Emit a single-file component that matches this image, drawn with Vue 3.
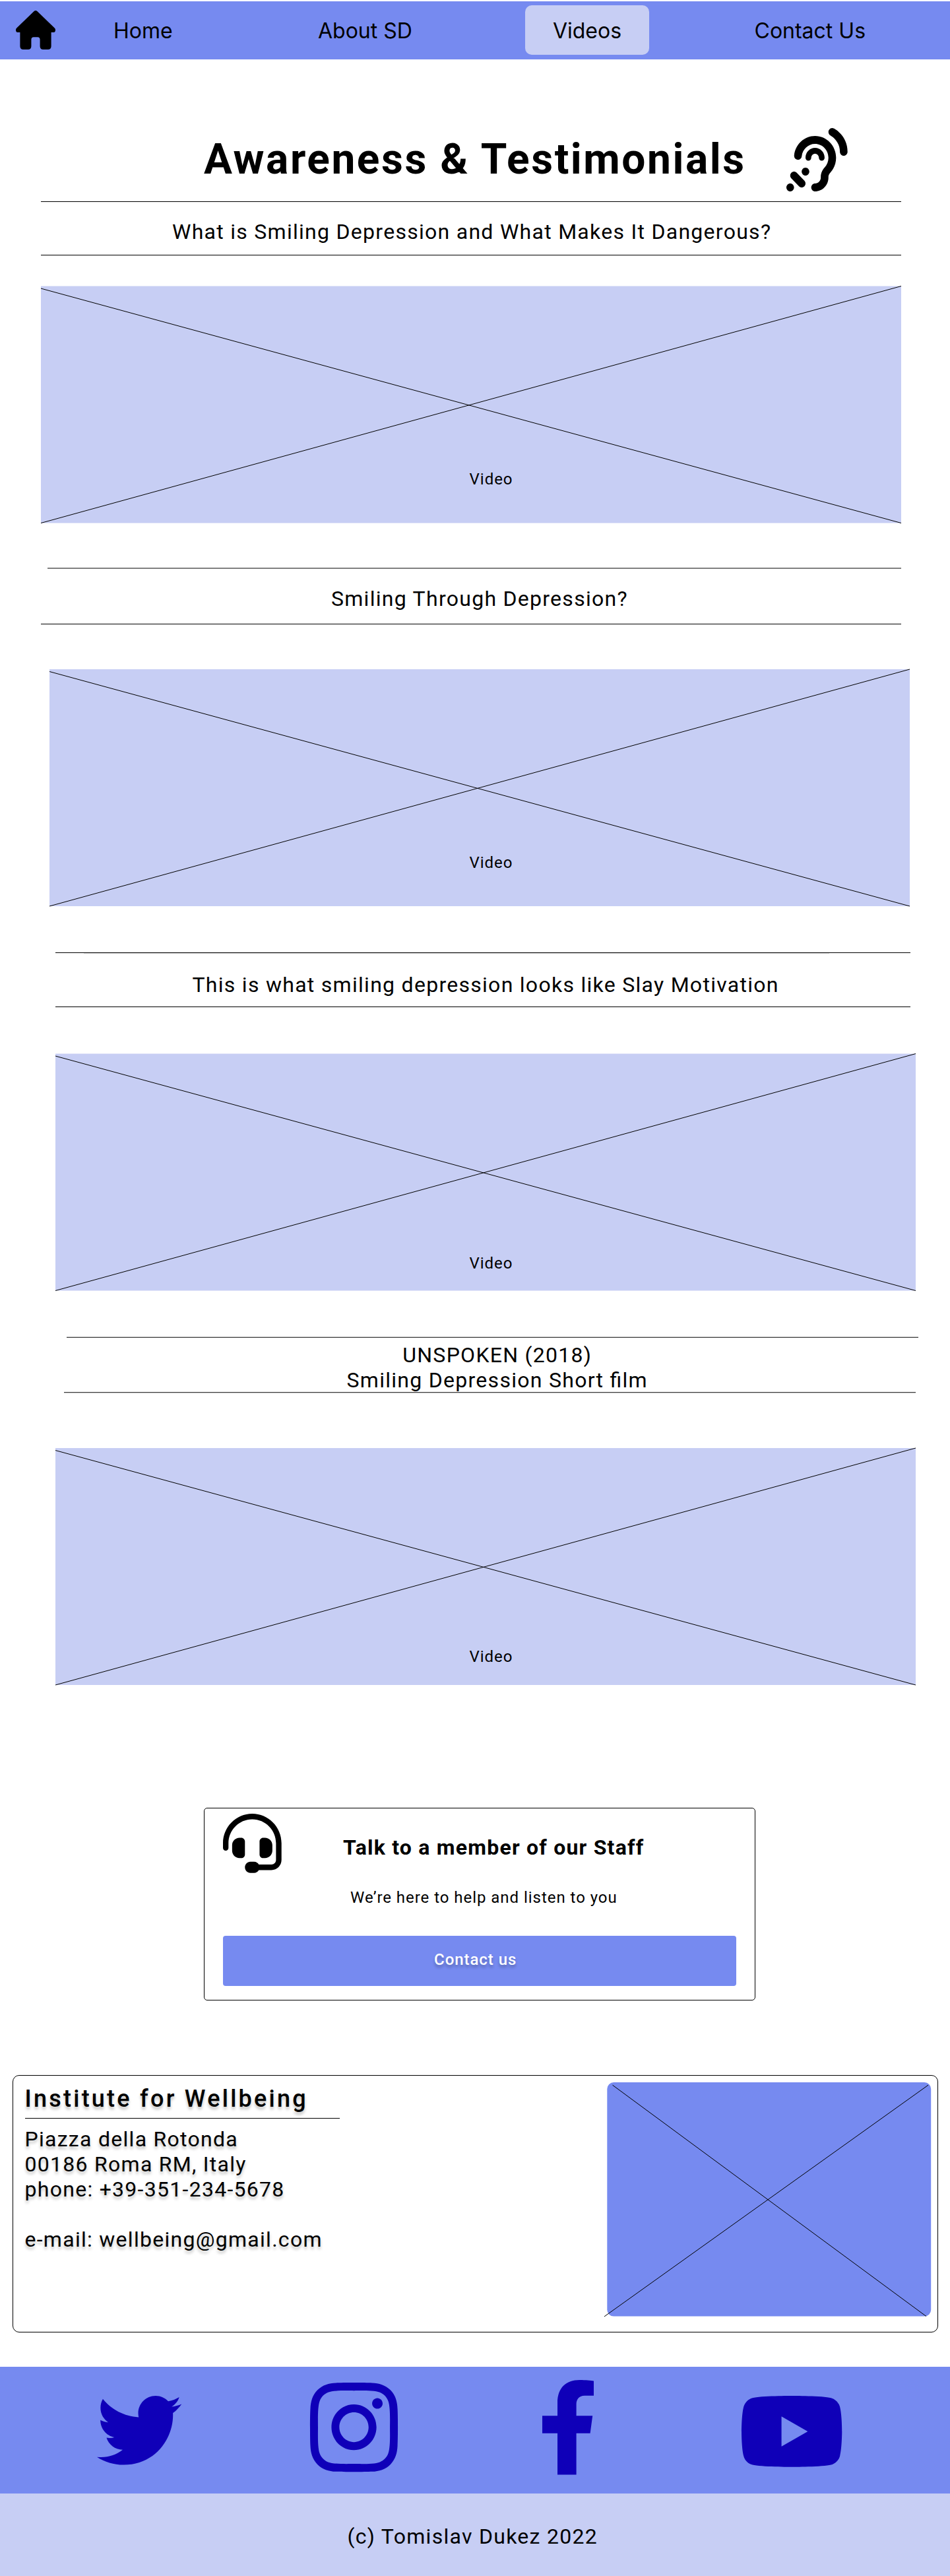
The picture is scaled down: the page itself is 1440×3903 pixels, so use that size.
<script setup>
const topics = [
  { id: 'dangerous', lines: ['What is Smiling Depression and What Makes It Dangerous?'], top: 0.5 },
  { id: 'through', lines: ['Smiling Through Depression?'], top: 1 },
  { id: 'motivation', lines: ['This is what smiling depression looks like Slay Motivation'], top: 0.5 },
  { id: 'unspoken', lines: ['UNSPOKEN (2018)', 'Smiling Depression Short film'], top: 1 },
]
</script>

<template>
  <div class="page">
    <nav class="nav">
      <svg class="home-icon" viewBox="0 0 60 59">
        <path d="M27.6 1.1Q30 -1.1 32.4 1.1L58.8 26.4Q60 27.6 60 29.4Q60 33 56.6 33H53.6V54Q53.6 59 48.6 59H41.6Q36.6 59 36.6 54V44Q36.6 40.2 33 40.2H27Q23.4 40.2 23.4 44V54Q23.4 59 18.4 59H11.4Q6.4 59 6.4 54V33H3.4Q0 33 0 29.4Q0 27.6 1.2 26.4Z" />
      </svg>
      <a class="link home">Home</a>
      <a class="link about">About SD</a>
      <a class="link videos">Videos</a>
      <a class="link contact">Contact Us</a>
    </nav>

    <header class="hero">
      <h1>Awareness &amp; Testimonials</h1>
      <svg class="ear" viewBox="0 0 512 512" preserveAspectRatio="none">
        <path d="M398.3 3.4c-15.8-7.9-35-1.5-42.9 14.3c-7.9 15.8-1.5 34.9 14.2 42.9l.4 .2c.4 .2 1.1 .6 2.1 1.2c2 1.2 5 3 8.7 5.6c7.5 5.2 17.6 13.2 27.7 24.2C428.5 113.4 448 146 448 192c0 17.7 14.3 32 32 32s32-14.3 32-32c0-66-28.5-113.4-56.5-143.7C441.6 33.2 427.7 22.2 417.3 15c-5.3-3.7-9.7-6.4-13-8.3c-1.6-1-3-1.7-4-2.2c-.5-.3-.9-.5-1.2-.7l-.8-.4zM128.7 227.5c6.2-56 53.7-99.5 111.3-99.5c61.9 0 112 50.1 112 112c0 29.3-11.2 55.9-29.6 75.9c-17 18.4-34.4 45.1-34.4 78V400c0 26.5-21.5 48-48 48c-17.7 0-32 14.3-32 32s14.3 32 32 32c61.9 0 112-50.1 112-112v-6.1c0-9.8 5.4-21.7 17.4-34.7C398.3 327.9 416 286 416 240c0-97.2-78.8-176-176-176C149.4 64 74.8 132.5 65.1 220.5c-1.9 17.6 10.7 33.4 28.3 35.3s33.4-10.7 35.3-28.3zM32 512c17.7 0 32-14.3 32-32s-14.3-32-32-32s-32 14.3-32 32s14.3 32 32 32zM192 352c0-17.7-14.3-32-32-32s-32 14.3-32 32s14.3 32 32 32s32-14.3 32-32zM41.4 361.4c-12.5 12.5-12.5 32.8 0 45.3l64 64c12.5 12.5 32.8 12.5 45.3 0s12.5-32.8 0-45.3l-64-64c-12.5-12.5-32.8-12.5-45.3 0zM208 240c0-17.7 14.3-32 32-32s32 14.3 32 32c0 13.3 10.7 24 24 24s24-10.7 24-24c0-44.2-35.8-80-80-80s-80 35.8-80 80c0 13.3 10.7 24 24 24s24-10.7 24-24z" />
      </svg>
    </header>

    <main>
      <section v-for="t in topics" :key="t.id" class="topic" :class="t.id">
        <div class="rule upper"></div>
        <h2 class="caption"><span v-for="l in t.lines" :key="l" class="line">{{ l }}</span></h2>
        <div class="rule lower"></div>
        <div class="video">
          <svg class="frame" width="1304" height="360" viewBox="0 0 1304 360">
            <rect x="0" :y="t.top" width="1304" height="359" fill="#c7cef4" />
            <path :d="`M0 ${t.top + 3.5}L1304 ${t.top + 359}M0 ${t.top + 359}L1304 ${t.top}`" class="cross" />
          </svg>
          <span class="video-label">Video</span>
        </div>
      </section>

      <section class="staff">
        <svg class="headset" viewBox="0 0 512 512" preserveAspectRatio="none">
          <path d="M256 48C141.1 48 48 141.1 48 256v40c0 13.3-10.7 24-24 24s-24-10.7-24-24V256C0 114.6 114.6 0 256 0S512 114.6 512 256V400.1c0 48.6-39.4 88-88.1 88L313.6 488c-8.3 14.3-23.8 24-41.6 24H240c-26.5 0-48-21.5-48-48s21.5-48 48-48h32c17.8 0 33.3 9.7 41.6 24l110.4 .1c22.1 0 40-17.9 40-40V256c0-114.9-93.1-208-208-208zM144 208h16c17.7 0 32 14.3 32 32V352c0 17.7-14.3 32-32 32H144c-35.3 0-64-28.7-64-64V272c0-35.3 28.7-64 64-64zm224 0c35.3 0 64 28.7 64 64v48c0 35.3-28.7 64-64 64H352c-17.7 0-32-14.3-32-32V240c0-17.7 14.3-32 32-32h16z" />
        </svg>
        <div class="staff-text">
          <h3>Talk to a member of our Staff</h3>
          <p>We’re here to help and listen to you</p>
        </div>
        <button type="button" class="contact-button">Contact us</button>
      </section>

      <section class="institute">
        <address class="details">
          <h3>Institute for Wellbeing</h3>
          <p>Piazza della Rotonda<br />00186 Roma RM, Italy<br />phone: +39-351-234-5678<br /><br />e-mail: wellbeing@gmail.com</p>
        </address>
        <svg class="photo" width="496" height="356" viewBox="0 0 496 356">
          <rect x="4.3" y="0" width="490.9" height="354.6" rx="10" fill="#768af0" />
          <path d="M12.5 4.2L488 354.6M491 4.2L0 354.9" class="cross" />
        </svg>
      </section>
    </main>

    <footer>
      <div class="social">
        <svg class="twitter" viewBox="0 48 512 416" preserveAspectRatio="none">
          <path d="M459.37 151.716c.325 4.548.325 9.097.325 13.645 0 138.72-105.583 298.558-298.558 298.558-59.452 0-114.68-17.219-161.137-47.106 8.447.974 16.568 1.299 25.34 1.299 49.055 0 94.213-16.568 130.274-44.832-46.132-.975-84.792-31.188-98.112-72.772 6.498.974 12.995 1.624 19.818 1.624 9.421 0 18.843-1.3 27.614-3.573-48.081-9.747-84.143-51.98-84.143-102.985v-1.299c13.969 7.797 30.214 12.67 47.431 13.319-28.264-18.843-46.781-51.005-46.781-87.391 0-19.492 5.197-37.36 14.294-52.954 51.655 63.675 129.3 105.258 216.365 109.807-1.624-7.797-2.599-15.918-2.599-24.04 0-57.828 46.782-104.934 104.934-104.934 30.213 0 57.502 12.67 76.67 33.137 23.715-4.548 46.456-13.32 66.599-25.34-7.798 24.366-24.366 44.833-46.132 57.827 21.117-2.273 41.584-8.122 60.426-16.243-14.292 20.791-32.161 39.308-52.628 54.253z" />
        </svg>
        <svg class="instagram" viewBox="0 32 448 448" preserveAspectRatio="none">
          <path d="M224.1 141c-63.6 0-114.9 51.3-114.9 114.9s51.3 114.9 114.9 114.9S339 319.5 339 255.9 287.7 141 224.1 141zm0 189.6c-41.1 0-74.7-33.5-74.7-74.7s33.5-74.7 74.7-74.7 74.7 33.5 74.7 74.7-33.6 74.7-74.7 74.7zm146.4-194.3c0 14.9-12 26.8-26.8 26.8-14.9 0-26.8-12-26.8-26.8s12-26.8 26.8-26.8 26.8 12 26.8 26.8zm76.1 27.2c-1.7-35.9-9.9-67.7-36.2-93.9-26.2-26.2-58-34.4-93.9-36.2-37-2.1-147.9-2.1-184.9 0-35.8 1.7-67.6 9.9-93.9 36.1s-34.4 58-36.2 93.9c-2.1 37-2.1 147.9 0 184.9 1.7 35.9 9.9 67.7 36.2 93.9s58 34.4 93.9 36.2c37 2.1 147.9 2.1 184.9 0 35.9-1.7 67.7-9.9 93.9-36.2 26.2-26.2 34.4-58 36.2-93.9 2.1-37 2.1-147.8 0-184.8zM398.8 388c-7.8 19.6-22.9 34.7-42.6 42.6-29.5 11.7-99.5 9-132.1 9s-102.7 2.6-132.1-9c-19.6-7.8-34.7-22.9-42.6-42.6-11.7-29.5-9-99.5-9-132.1s-2.6-102.7 9-132.1c7.8-19.6 22.9-34.7 42.6-42.6 29.5-11.7 99.5-9 132.1-9s102.7-2.6 132.1 9c19.6 7.8 34.7 22.9 42.6 42.6 11.7 29.5 9 99.5 9 132.1s2.7 102.7-9 132.1z" />
        </svg>
        <svg class="facebook" viewBox="0 0 78 144">
          <path d="M23 143.6V80.8H0V54.3H23V34.5C23 12 36 0 56.5 0C66 0 74 .8 78 1.6V23.8H64.5C54.5 23.8 51.6 30.5 51.6 37V54.3H76.2L72.6 80.8H51.6V143.6Z" />
        </svg>
        <svg class="youtube" viewBox="14.933 64 546.134 384" preserveAspectRatio="none">
          <path d="M549.655 124.083c-6.281-23.65-24.787-42.276-48.284-48.597C458.781 64 288 64 288 64S117.22 64 74.629 75.486c-23.497 6.322-42.003 24.947-48.284 48.597-11.412 42.867-11.412 132.305-11.412 132.305s0 89.438 11.412 132.305c6.281 23.65 24.787 41.5 48.284 47.821C117.22 448 288 448 288 448s170.78 0 213.371-11.486c23.497-6.321 42.003-24.171 48.284-47.821 11.412-42.867 11.412-132.305 11.412-132.305s0-89.438-11.412-132.305zm-317.51 213.508V175.185l142.739 81.205-142.739 81.201z" />
        </svg>
      </div>
      <p class="copyright">(c) Tomislav Dukez 2022</p>
    </footer>
  </div>
</template>

<style>
body {
  margin: 0;
  background: #fff;
}
</style>

<style scoped>
.page {
  width: 1440px;
  height: 3903px;
  overflow: hidden;
  box-sizing: border-box;
  padding-top: 2px;
  color: #000;
  font: 400 32px/38px Roboto, sans-serif;
  letter-spacing: 0.04em;
}
h1, h2, h3, p {
  margin: 0;
  font-weight: 400;
  font-size: inherit;
  white-space: nowrap;
}
svg {
  display: block;
  flex: none;
  overflow: visible;
}
.cross {
  fill: none;
  stroke: #000;
  stroke-width: 1;
}

/* navigation */
.nav {
  display: flex;
  align-items: flex-start;
  height: 88px;
  background: #768af0;
  font-family: Inter, sans-serif;
  letter-spacing: 0;
}
.home-icon {
  width: 60px;
  height: 59px;
  margin: 14px 0 0 24px;
}
.link {
  flex: none;
  height: 75px;
  margin-top: 6px;
  line-height: 77px;
  white-space: nowrap;
}
.home { width: 90px; margin-left: 88px; }
.about { width: 143px; margin-left: 220px; }
.videos {
  width: 188px;
  margin-left: 171px;
  border-radius: 10px;
  background: #c7cef4;
  text-align: center;
}
.contact { margin-left: 159.5px; }

/* page title */
.hero {
  display: flex;
  align-items: flex-start;
  height: 215px;
}
h1 {
  width: 823px;
  margin: 114px 0 0 309px;
  font-weight: 700;
  font-size: 64px;
  line-height: 76px;
  letter-spacing: 0.04em;
}
.ear {
  width: 92.7px;
  height: 96px;
  margin: 104px 0 0 60px;
}

/* video topics */
.rule {
  height: 1px;
  background: #000;
}
.caption {
  box-sizing: border-box;
}
.line {
  display: block;
}
.video {
  display: grid;
  width: 1304px;
}
.frame, .video-label {
  grid-area: 1 / 1;
}
.video-label {
  font-size: 24px;
  line-height: 28px;
  letter-spacing: 0.04em;
}
.dangerous .rule { width: 1304px; margin-left: 62px; }
.dangerous .caption { height: 80px; padding: 26px 0 0 261px; }
.dangerous .video { margin: 46px 0 0 62px; }
.dangerous .video-label { margin: 279px 0 0 649.6px; }

.through { padding-top: 67px; }
.through .upper { width: 1294px; height: 2px; margin-left: 72px; background: #808080; }
.through .caption { height: 83px; padding: 26px 0 0 502px; }
.through .lower { width: 1304px; margin-left: 62px; }
.through .video { margin: 67px 0 0 75.4px; }
.through .video-label { margin: 280px 0 0 636.2px; }

.motivation { padding-top: 70px; }
.motivation .rule { width: 1296px; margin-left: 83.5px; }
.motivation .caption {
  height: 81px;
  padding: 29px 0 0 291.5px;
  background: linear-gradient(#d9d9d9, #d9d9d9) 127px 0 / 1130px 1px no-repeat;
}
.motivation .video { margin: 70px 0 0 83.5px; }
.motivation .video-label { margin: 304px 0 0 628px; }

.unspoken { padding-top: 69px; }
.unspoken .rule { width: 1291px; height: 2px; }
.unspoken .upper { margin-left: 101px; background: linear-gradient(#bfbfbf 50%, #404040 50%); }
.unspoken .lower { margin-left: 97px; background: linear-gradient(#404040 50%, #bfbfbf 50%); }
.unspoken .caption {
  width: 1507.5px;
  height: 82px;
  padding-top: 7px;
  text-align: center;
  font-feature-settings: "liga" 1;
}
.unspoken .video { margin: 82px 0 0 83.5px; }
.unspoken .video-label { margin: 303px 0 0 628px; }

/* staff card */
.staff {
  display: grid;
  grid-template-columns: 89px 1fr;
  grid-template-rows: 185px 76.4px;
  column-gap: 93px;
  box-sizing: border-box;
  width: 836px;
  height: 292px;
  margin: 186px 0 0 309px;
  padding: 8px 0 0 28px;
  border: 1px solid #000;
  border-radius: 5px;
}
.headset {
  width: 88.7px;
  height: 89.7px;
}
.staff-text h3 {
  margin-top: 32px;
  font-weight: 700;
  letter-spacing: 1.22px;
}
.staff-text p {
  margin: 43px 0 0 11px;
  font-size: 24px;
  line-height: 28px;
  letter-spacing: 0.04em;
}
.contact-button {
  grid-column: 1 / 3;
  width: 778px;
  padding: 0 0 4px 320px;
  border: 0;
  border-radius: 4px;
  background: #768af0;
  color: #fff;
  font: 500 24px/28px Roboto, sans-serif;
  letter-spacing: 0.04em;
  text-align: left;
  text-shadow: 0 4px 4px rgba(0, 0, 0, 0.25);
}

/* institute card */
.institute {
  display: flex;
  justify-content: space-between;
  box-sizing: border-box;
  width: 1403px;
  height: 390px;
  margin: 113px 0 0 19px;
  padding: 10px 9px 0 17.5px;
  border: 1px solid #000;
  border-radius: 10px;
}
.details {
  font-style: normal;
  text-shadow: 0 4px 4px rgba(0, 0, 0, 0.25);
}
.details h3 {
  width: 477px;
  height: 50px;
  margin-top: 4px;
  border-bottom: 1px solid #000;
  font-weight: 500;
  font-size: 36px;
  line-height: 42px;
  letter-spacing: 0.09em;
}
.details p {
  margin-top: 12px;
}

/* footer */
.social {
  display: flex;
  align-items: flex-start;
  height: 192px;
  margin-top: 52px;
  background: #768af0;
  fill: #0f00b8;
}
.twitter { width: 128.3px; height: 104.6px; margin: 43.8px 0 0 147px; }
.instagram { width: 133px; height: 135.3px; margin: 24.2px 0 0 194.7px; }
.facebook { width: 78px; height: 144px; margin: 20px 0 0 219px; }
.youtube { width: 152.3px; height: 107.8px; margin: 43.7px 0 0 224px; }
.copyright {
  height: 125px;
  box-sizing: border-box;
  padding: 46px 0 0 526.6px;
  background: #c7cef4;
}
</style>
